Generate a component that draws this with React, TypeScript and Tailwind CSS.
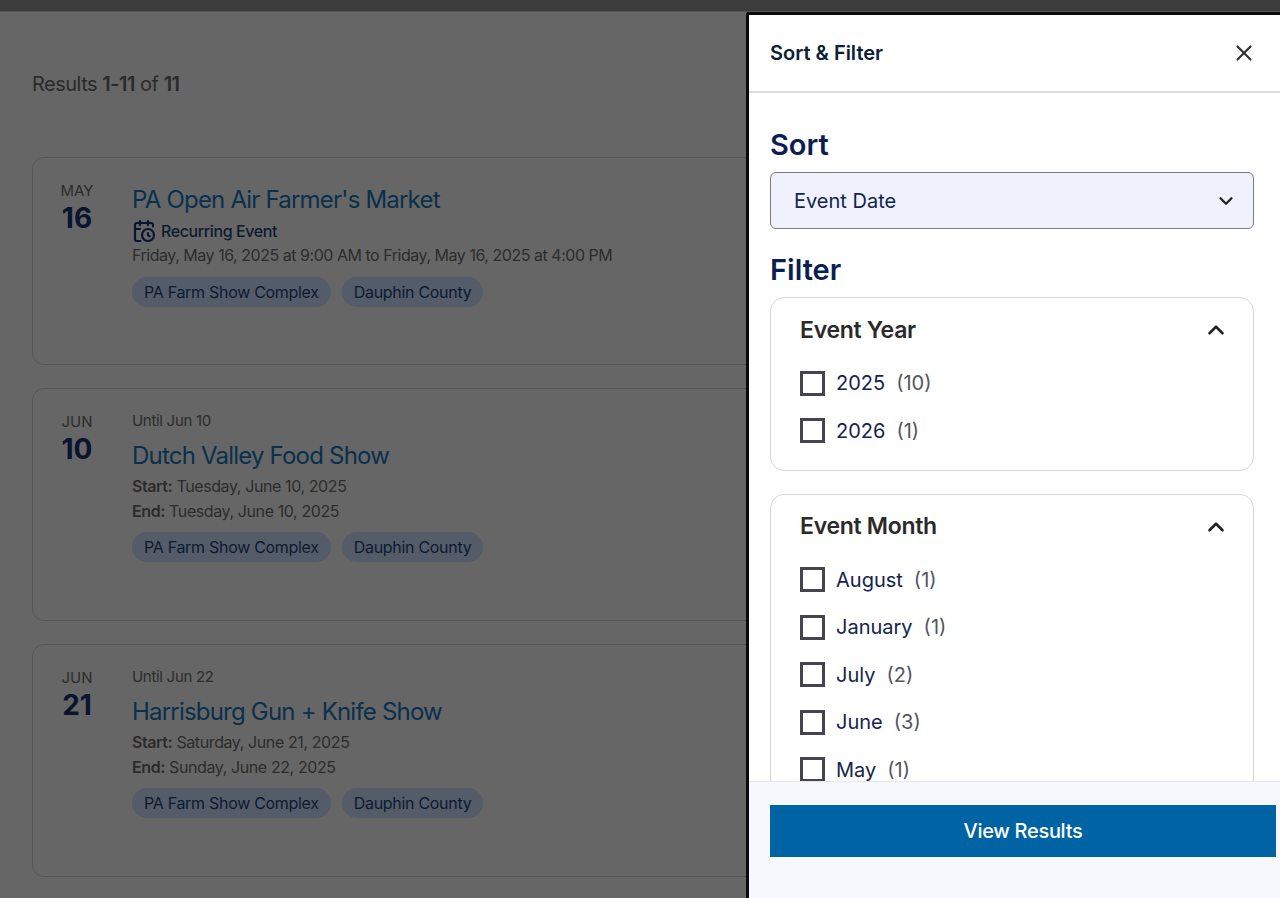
import React from 'react';
import { CalendarClock, ChevronDown, ChevronUp, X } from 'lucide-react';

const font = { fontFamily: 'Inter, "Noto Sans", sans-serif' };

interface EventItem {
  month: string;
  day: string;
  until?: string;
  title: string;
  start?: string;
  end?: string;
  heightClass: string;
}

const events: EventItem[] = [
  { month: 'MAY', day: '16', title: "PA Open Air Farmer's Market", heightClass: 'h-[208px]' },
  { month: 'JUN', day: '10', until: 'Until Jun 10', title: 'Dutch Valley Food Show', start: 'Tuesday, June 10, 2025', end: 'Tuesday, June 10, 2025', heightClass: 'h-[233px]' },
  { month: 'JUN', day: '21', until: 'Until Jun 22', title: 'Harrisburg Gun + Knife Show', start: 'Saturday, June 21, 2025', end: 'Sunday, June 22, 2025', heightClass: 'h-[233px]' },
];

const Tag = ({ label }: { label: string }) => (
  <span className="h-[30px] px-3 rounded-full bg-[#545c69] text-[#0d1a30] text-[16px] tracking-[-0.3px] flex items-center">{label}</span>
);

const EventCard = ({ item }: { item: EventItem }) => (
  <div className={`${item.heightClass} w-[900px] border border-[#565656] rounded-xl flex pt-[22px]`}>
    <div className="w-[88px] shrink-0 flex flex-col items-center">
      <span className="text-[15px] leading-[22px] text-[#2c2c2c]">{item.month}</span>
      <span className="text-[28px] leading-[32px] font-bold text-[#0b1330]">{item.day}</span>
    </div>
    <div className="ml-[11px] flex flex-col">
      {item.until ? (
        <span className="text-[15px] leading-[20px] text-[#2c2c2c] tracking-[-0.3px] mb-[10px]">{item.until}</span>
      ) : (
        <span className="h-[5px]" />
      )}
      <h3 className="text-[24px] leading-[30px] text-[#09304c] tracking-[-0.8px]">{item.title}</h3>
      {item.start ? (
        <div className="mt-[3px] text-[16px] leading-[25px] text-[#2c2c2c] tracking-[-0.4px]">
          <div><span className="font-semibold">Start:</span> {item.start}</div>
          <div><span className="font-semibold">End:</span> {item.end}</div>
        </div>
      ) : (
        <>
          <div className="mt-[4px] flex items-center gap-[5px] text-[16px] leading-[22px] font-medium text-[#0d1a30] tracking-[-0.4px]">
            <CalendarClock size={24} strokeWidth={2.2} className="text-[#0b1330]" />
            Recurring Event
          </div>
          <div className="mt-[1px] text-[16px] leading-[22px] text-[#2c2c2c] tracking-[-0.47px] whitespace-nowrap">
            Friday, May 16, 2025 at 9:00 AM to Friday, May 16, 2025 at 4:00 PM
          </div>
        </>
      )}
      <div className={`${item.start ? 'mt-[8px]' : 'mt-[11px]'} flex gap-[11px]`}>
        <Tag label="PA Farm Show Complex" />
        <Tag label="Dauphin County" />
      </div>
    </div>
  </div>
);

const CheckRow = ({ label, count }: { label: string; count: number }) => (
  <div className="flex items-center h-[24px]">
    <span className="w-[25px] h-[25px] border-[3px] border-[#45454f] shrink-0" />
    <span className="ml-[11px] text-[20px] text-[#14234f]">{label}</span>
    <span className="ml-[11px] text-[20px] text-[#55555e]">({count})</span>
  </div>
);

const FilterGroup = ({ title, rows }: { title: string; rows: [string, number][] }) => (
  <div className="border border-[#d5d5dc] rounded-[14px] pl-[29px] pr-[24px] pt-[16px] pb-[27px]">
    <div className="flex items-center justify-between h-[32px]">
      <span className="text-[23px] font-semibold text-[#2a2a2a] tracking-[-0.3px]">{title}</span>
      <ChevronUp size={26} strokeWidth={2.4} className="text-[#222222]" />
    </div>
    <div className="mt-[25px] flex flex-col gap-[23.5px]">
      {rows.map(([label, count]) => (
        <CheckRow key={label} label={label} count={count} />
      ))}
    </div>
  </div>
);

export default function App() {
  return (
    <div style={font} className="relative w-[1280px] h-[898px] overflow-hidden bg-[#666666]">
      <div className="h-[12px] bg-[#3c3c3c] border-b border-[#555555]" />

      {/* Results behind the drawer */}
      <div className="pl-[32px]">
        <p className="mt-[58px] text-[20px] leading-[28px] text-[#2a2a2a] tracking-[-0.5px]">
          Results <span className="font-semibold">1-11</span> of <span className="font-semibold">11</span>
        </p>
        <div className="mt-[59px] flex flex-col gap-[23px]">
          {events.map(item => (
            <EventCard key={item.title} item={item} />
          ))}
        </div>
      </div>

      {/* Drawer */}
      <div className="absolute left-[746px] top-[12px] right-0 bottom-0 bg-white border-l-[3px] border-t-[3px] border-[#0a0a0a] rounded-tl-[3px] flex flex-col">
        <div className="h-[78px] shrink-0 border-b-2 border-[#dcdce0] pl-[21px] pr-[23px] flex items-center justify-between">
          <span className="text-[20px] font-semibold text-[#0b2038]">Sort &amp; Filter</span>
          <X size={26} strokeWidth={2} className="text-[#333333]" />
        </div>

        <div className="flex-1 min-h-0 overflow-hidden pl-[21px] pr-[26px]">
          <h2 className="mt-[32px] text-[29px] leading-[40px] font-semibold text-[#0b1d52]">Sort</h2>
          <div className="mt-[7px] h-[57px] bg-[#eff2fd] border border-[#7b7b86] rounded-[6px] pl-[23px] pr-[16px] flex items-center justify-between">
            <span className="text-[20px] text-[#14234f]">Event Date</span>
            <ChevronDown size={22} strokeWidth={2.4} className="text-[#222222]" />
          </div>
          <h2 className="mt-[21px] text-[29px] leading-[40px] font-semibold text-[#0b1d52]">Filter</h2>
          <div className="mt-[7px] flex flex-col gap-[23px]">
            <FilterGroup title="Event Year" rows={[['2025', 10], ['2026', 1]]} />
            <FilterGroup
              title="Event Month"
              rows={[['August', 1], ['January', 1], ['July', 2], ['June', 3], ['May', 1]]}
            />
          </div>
        </div>

        <div className="h-[117px] shrink-0 bg-[#f7f7fe] border-t border-[#e6e6ec] pl-[21px] pr-[4px] pt-[23px]">
          <button className="w-full h-[52px] bg-[#0063a3] text-white text-[20px] font-medium tracking-[-0.3px]">View Results</button>
        </div>
      </div>
    </div>
  );
}
